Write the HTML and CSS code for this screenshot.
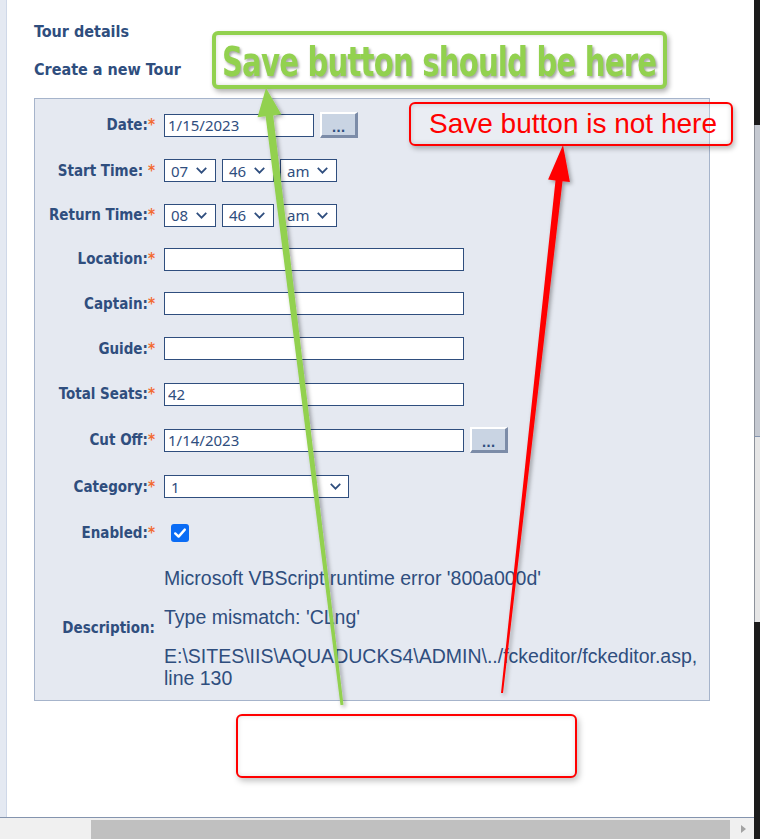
FILE: index.html
```html
<!DOCTYPE html>
<html>
<head>
<meta charset="utf-8">
<link rel="stylesheet" href="styles.css">
</head>
<body>
<div class="window">
  <div class="main">
    <div class="viewport">
      <div class="gutter"></div>
      <div class="page">
        <div class="title">Tour details</div>
        <div class="title">Create a new Tour</div>
        <div class="panel">
          <div class="lbl">Date:<span class="req">*</span></div>
          <div class="ctrl"><input class="field w150" type="text" value="1/15/2023"><button class="dots">...</button></div>

          <div class="lbl">Start Time: <span class="req">*</span></div>
          <div class="ctrl">
            <div class="sel w52"><span>07</span><svg class="chev" viewBox="0 0 10 6"><path d="M0.7 0.7 L5 5 L9.3 0.7"/></svg></div>
            <div class="sel w52"><span>46</span><svg class="chev" viewBox="0 0 10 6"><path d="M0.7 0.7 L5 5 L9.3 0.7"/></svg></div>
            <div class="sel w57"><span>am</span><svg class="chev" viewBox="0 0 10 6"><path d="M0.7 0.7 L5 5 L9.3 0.7"/></svg></div>
          </div>

          <div class="lbl">Return Time:<span class="req">*</span></div>
          <div class="ctrl">
            <div class="sel w52"><span>08</span><svg class="chev" viewBox="0 0 10 6"><path d="M0.7 0.7 L5 5 L9.3 0.7"/></svg></div>
            <div class="sel w52"><span>46</span><svg class="chev" viewBox="0 0 10 6"><path d="M0.7 0.7 L5 5 L9.3 0.7"/></svg></div>
            <div class="sel w57"><span>am</span><svg class="chev" viewBox="0 0 10 6"><path d="M0.7 0.7 L5 5 L9.3 0.7"/></svg></div>
          </div>

          <div class="lbl">Location:<span class="req">*</span></div>
          <div class="ctrl"><input class="field w300" type="text" value=""></div>

          <div class="lbl">Captain:<span class="req">*</span></div>
          <div class="ctrl"><input class="field w300" type="text" value=""></div>

          <div class="lbl">Guide:<span class="req">*</span></div>
          <div class="ctrl"><input class="field w300" type="text" value=""></div>

          <div class="lbl">Total Seats:<span class="req">*</span></div>
          <div class="ctrl"><input class="field w300" type="text" value="42"></div>

          <div class="lbl">Cut Off:<span class="req">*</span></div>
          <div class="ctrl"><input class="field w300" type="text" value="1/14/2023"><button class="dots">...</button></div>

          <div class="lbl">Category:<span class="req">*</span></div>
          <div class="ctrl">
            <div class="sel w185"><span>1</span><svg class="chev" viewBox="0 0 10 6"><path d="M0.7 0.7 L5 5 L9.3 0.7"/></svg></div>
          </div>

          <div class="lbl">Enabled:<span class="req">*</span></div>
          <div class="ctrl">
            <span class="check"><svg viewBox="0 0 18 18"><path d="M4.2 9.4 L7.6 12.6 L13.8 5.6"/></svg></span>
          </div>

          <div class="lbl desc-lbl">Description:</div>
          <div class="desc">
            <p>Microsoft VBScript runtime error '800a000d'</p>
            <p>Type mismatch: 'CLng'</p>
            <p>E:\SITES\IIS\AQUADUCKS4\ADMIN\../fckeditor/fckeditor.asp,<br>line 130</p>
          </div>
        </div>
      </div>
    </div>
    <div class="hbar"><div class="hthumb"></div><div class="harrow"></div></div>
  </div>
  <div class="vbar">
    <div class="vtop"></div>
    <div class="vthumb"></div>
    <div class="vtrack"></div>
    <div class="vbottom"></div>
  </div>

  <div class="note green-note"><span class="green-text">Save button should be here</span></div>
  <div class="note red-note">Save button is not here</div>
  <div class="note red-empty"></div>

  <svg class="arrows" width="760" height="839" viewBox="0 0 760 839">
    <defs>
      <filter id="sh" x="-50%" y="-10%" width="200%" height="120%">
        <feDropShadow dx="2" dy="2" stdDeviation="2" flood-color="#000" flood-opacity="0.35"/>
      </filter>
    </defs>
    <polygon filter="url(#sh)" fill="#92d14f" points="340.5,705.2 343.5,704.8 273.2,115.4 281.3,114.3 266,88 257.5,117.3 265.6,116.3"/>
    <polygon filter="url(#sh)" fill="#ff0000" points="501,692.9 503,693.1 562.5,181.2 569.9,182 563,145 548.1,179.6 555.5,180.4"/>
  </svg>
</div>
</body>
</html>
```

FILE: styles.css
```css
* { box-sizing: border-box; }

html, body {
  margin: 0;
  padding: 0;
  background: #ffffff;
}

.window {
  position: relative;
  width: 760px;
  height: 839px;
  display: flex;
  overflow: hidden;
}

.main {
  width: 754px;
  display: flex;
  flex-direction: column;
}

.viewport {
  flex: 1;
  display: flex;
  background: #ffffff;
}

.gutter {
  width: 7px;
  background: #e4e9f2;
  border-right: 1px solid #cfd8e8;
}

.page {
  flex: 1;
  padding: 22px 0 0 27px;
}

.title {
  font-family: "DejaVu Sans", sans-serif;
  font-stretch: condensed;
  font-weight: bold;
  font-size: 16px;
  line-height: 20px;
  color: #2f4e7e;
  margin-bottom: 18px;
}

.panel {
  width: 676px;
  height: 603px;
  background: #e5e9f1;
  border: 1px solid #a6b4cb;
  padding-top: 3px;
  display: grid;
  grid-template-columns: 120px 1fr;
  grid-template-rows: 46px 45px 44px 44px 45px 45px 46px 46px 47px 46px 143px;
  column-gap: 9px;
}

.lbl {
  display: flex;
  align-items: center;
  justify-content: flex-end;
  font-family: "DejaVu Sans", sans-serif;
  font-stretch: condensed;
  font-weight: bold;
  font-size: 15px;
  color: #2f4e7e;
  white-space: pre;
}

.req {
  color: #f26a32;
}

.ctrl {
  display: flex;
  align-items: center;
  gap: 6px;
}

.field {
  height: 23px;
  margin: 0;
  border: 1px solid #2f4e7e;
  background: #ffffff;
  padding: 0 3px;
  font-family: "Noto Sans", sans-serif;
  font-size: 15px;
  color: #2f4e7e;
  outline: none;
}

.w150 { width: 150px; }
.w300 { width: 300px; }

.dots {
  width: 38px;
  height: 26px;
  margin: 0;
  padding: 6px 0 0 0;
  background: #c9d4e3;
  border-style: solid;
  border-width: 2px 3px 3px 2px;
  border-color: #ffffff #7c8ca8 #7c8ca8 #ffffff;
  font-family: "DejaVu Sans", sans-serif;
  font-weight: bold;
  font-size: 12px;
  line-height: 12px;
  color: #2f4e7e;
}

.sel {
  height: 23px;
  border: 1px solid #2f4e7e;
  background: #ffffff;
  display: flex;
  align-items: center;
  justify-content: space-between;
  padding: 0 8px 0 6px;
  font-family: "Noto Sans", sans-serif;
  font-size: 15px;
  color: #2f4e7e;
}

.w52 { width: 52px; }
.w57 { width: 57px; }
.w185 { width: 185px; padding-right: 7px; }

.chev {
  width: 11px;
  height: 7px;
  fill: none;
  stroke: #2f4e7e;
  stroke-width: 1.6;
}

.check {
  width: 18px;
  height: 18px;
  margin-left: 7px;
  border-radius: 3px;
  background: #0a6cf5;
  display: block;
}

.check svg {
  width: 18px;
  height: 18px;
  display: block;
  fill: none;
  stroke: #ffffff;
  stroke-width: 2.4;
  stroke-linecap: round;
  stroke-linejoin: round;
}

.desc-lbl {
  font-size: 15px;
}

.desc {
  padding-top: 11px;
  font-family: "Liberation Sans", Arial, sans-serif;
  font-size: 19.5px;
  line-height: 22px;
  color: #2f4e7e;
}

.desc p {
  margin: 0 0 17px 0;
}

.hbar {
  height: 22px;
  border-top: 1px solid #8494ae;
  background: #f0f0f0;
  position: relative;
}

.hthumb {
  position: absolute;
  left: 91px;
  top: 2px;
  width: 639px;
  height: 19px;
  background: #c0c0c0;
}

.harrow {
  position: absolute;
  left: 741px;
  top: 7px;
  width: 0;
  height: 0;
  border-top: 4px solid transparent;
  border-bottom: 4px solid transparent;
  border-left: 5px solid #a3a3a3;
}

.vbar {
  width: 6px;
  display: flex;
  flex-direction: column;
  background: #1c1c1c;
}

.vtop { height: 125px; }

.vthumb {
  height: 312px;
  background: #c5c9d1;
  border-left: 1px solid #8d929b;
  border-bottom: 1px solid #8494ae;
}

.vtrack {
  height: 185px;
  background: #e6e6e6;
  border-left: 1px solid #8d929b;
}

.vbottom { flex: 1; }

.note {
  position: absolute;
  border-radius: 6px;
}

.green-note {
  left: 212px;
  top: 31px;
  width: 455px;
  height: 58px;
  border: 4px solid #92d14f;
  background: #ffffff;
  box-shadow: 2px 3px 5px rgba(0, 0, 0, 0.3), inset 0 0 4px rgba(0, 0, 0, 0.15);
  display: flex;
  align-items: center;
  justify-content: center;
  padding-top: 4px;
  white-space: nowrap;
}

.green-text {
  display: inline-block;
  font-family: "DejaVu Sans", sans-serif;
  font-stretch: condensed;
  font-weight: bold;
  font-size: 40px;
  letter-spacing: -1px;
  color: #92d14f;
  text-shadow: 2px 2px 3px rgba(0, 0, 0, 0.35);
  transform: scaleX(0.81);
}

.red-note {
  left: 409px;
  top: 102px;
  width: 324px;
  height: 44px;
  border: 2px solid #ff0000;
  background: rgba(255, 255, 255, 0.2);
  box-shadow: 2px 3px 5px rgba(0, 0, 0, 0.25), inset 0 0 5px rgba(0, 0, 0, 0.15);
  padding-left: 18px;
  display: flex;
  align-items: center;
  font-family: "Liberation Sans", Arial, sans-serif;
  font-size: 28px;
  color: #ff0000;
  white-space: nowrap;
}

.red-empty {
  left: 236px;
  top: 714px;
  width: 341px;
  height: 64px;
  border: 2px solid #ff0000;
  background: #ffffff;
  box-shadow: 2px 3px 6px rgba(0, 0, 0, 0.25), inset 0 0 5px rgba(0, 0, 0, 0.12);
}

.arrows {
  position: absolute;
  left: 0;
  top: 0;
  pointer-events: none;
}
```
